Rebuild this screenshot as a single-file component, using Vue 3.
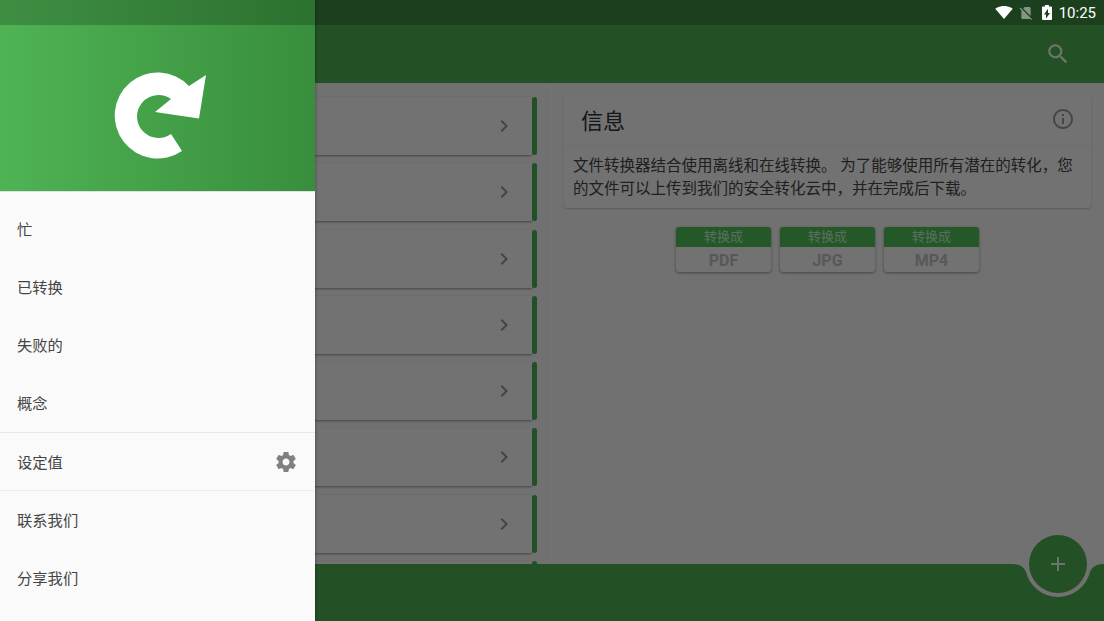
<template>
  <div class="screen">
    <div class="app">
      <header class="toolbar">
        <svg class="search-icon" viewBox="0 0 24 24"><path d="M15.5 14h-.79l-.28-.27A6.47 6.47 0 0 0 16 9.5 6.5 6.5 0 1 0 9.5 16c1.61 0 3.09-.59 4.23-1.57l.27.28v.79l5 4.99L20.49 19l-4.99-5zm-6 0C7.01 14 5 11.99 5 9.5S7.01 5 9.5 5 14 7.01 14 9.5 11.99 14 9.5 14z" /></svg>
      </header>

      <main class="content">
        <section class="list-pane">
          <div v-for="n in 8" :key="n" class="list-row">
            <div class="list-card">
              <svg class="chevron" viewBox="0 0 24 24"><path d="M10 6L8.59 7.41 13.17 12l-4.58 4.59L10 18l6-6z" /></svg>
            </div>
            <div class="list-bar"></div>
          </div>
        </section>

        <section class="info-pane">
          <div class="info-card">
            <div class="info-head">
              <h2>信息</h2>
              <svg class="info-icon" viewBox="0 0 24 24"><path d="M11 7h2v2h-2zm0 4h2v6h-2zm1-9C6.48 2 2 6.48 2 12s4.48 10 10 10 10-4.48 10-10S17.52 2 12 2zm0 18c-4.41 0-8-3.59-8-8s3.59-8 8-8 8 3.59 8 8-3.59 8-8 8z" /></svg>
            </div>
            <p>文件转换器结合使用离线和在线转换。 为了能够使用所有潜在的转化，您的文件可以上传到我们的安全转化云中，并在完成后下载。</p>
          </div>

          <div class="formats">
            <div v-for="f in formats" :key="f" class="format">
              <div class="format-top">转换成</div>
              <div class="format-name">{{ f }}</div>
            </div>
          </div>
        </section>
      </main>

      <footer class="bottom-bar">
        <svg class="bar-shape" viewBox="0 0 1104 57">
          <path d="M0 0H1012C1020 0 1024 3 1026 8A33 33 0 0 0 1090 8C1092 3 1096 0 1104 0V57H0Z" />
        </svg>
        <button class="fab">
          <svg viewBox="0 0 24 24"><path d="M19 13h-6v6h-2v-6H5v-2h6V5h2v6h6v2z" /></svg>
        </button>
      </footer>
    </div>

    <div class="scrim"></div>

    <aside class="drawer">
      <div class="drawer-head">
        <svg class="logo" viewBox="110 70 100 92">
          <path d="M206 74L189 85A43 43 0 1 0 182 150L171 133A21.5 21.5 0 1 1 171 98L155 111L199 117.5Z" />
        </svg>
      </div>
      <nav class="menu">
        <a v-for="m in topItems" :key="m" class="menu-item">{{ m }}</a>
      </nav>
      <div class="settings-row">
        <span class="settings-label">设定值</span>
        <svg class="gear" viewBox="0 0 24 24"><path d="M19.43 12.98c.04-.32.07-.64.07-.98s-.03-.66-.07-.98l2.11-1.65c.19-.15.24-.42.12-.64l-2-3.46c-.12-.22-.39-.3-.61-.22l-2.49 1c-.52-.4-1.08-.73-1.69-.98l-.38-2.65C14.46 2.18 14.25 2 14 2h-4c-.25 0-.46.18-.49.42l-.38 2.65c-.61.25-1.17.59-1.69.98l-2.49-1c-.23-.09-.49 0-.61.22l-2 3.46c-.13.22-.07.49.12.64l2.11 1.65c-.04.32-.07.65-.07.98s.03.66.07.98l-2.11 1.65c-.19.15-.24.42-.12.64l2 3.46c.12.22.39.3.61.22l2.49-1c.52.4 1.08.73 1.69.98l.38 2.65c.03.24.24.42.49.42h4c.25 0 .46-.18.49-.42l.38-2.65c.61-.25 1.17-.59 1.69-.98l2.49 1c.23.09.49 0 .61-.22l2-3.46c.12-.22.07-.49-.12-.64l-2.11-1.65zM12 15.5c-1.93 0-3.5-1.57-3.5-3.5s1.57-3.5 3.5-3.5 3.5 1.57 3.5 3.5-1.57 3.5-3.5 3.5z" /></svg>
      </div>
      <nav class="menu menu-bottom">
        <a v-for="m in bottomItems" :key="m" class="menu-item">{{ m }}</a>
      </nav>
    </aside>

    <div class="status-bar">
      <svg class="st-wifi" viewBox="0 3 24 18.5" preserveAspectRatio="none"><path d="M12.01 21.49L23.64 7c-.45-.34-4.93-4-11.64-4C5.28 3 .81 6.66.36 7l11.63 14.49.01.01.01-.01z" /></svg>
      <svg class="st-sim" viewBox="0 0 24 24"><path d="M18.99 5c0-1.1-.89-2-1.99-2h-7L7.66 5.34 19 16.68 18.99 5zM3.65 3.88L2.38 5.15 5 7.77V19c0 1.1.9 2 2 2h10.01c.35 0 .67-.1.96-.26l1.88 1.88 1.27-1.27L3.65 3.88z" /></svg>
      <svg class="st-batt" viewBox="7 2 10 20" preserveAspectRatio="none"><path d="M15.67 4H14V2h-4v2H8.33C7.6 4 7 4.6 7 5.33v15.33C7 21.4 7.6 22 8.33 22h7.33c.74 0 1.34-.6 1.34-1.33V5.33C17 4.6 16.4 4 15.67 4zM11 20v-5.5H9L13 7v5.5h2L11 20z" /></svg>
      <span class="time">10:25</span>
    </div>
  </div>
</template>

<script setup>
const formats = ["PDF", "JPG", "MP4"];
const topItems = ["忙", "已转换", "失败的", "概念"];
const bottomItems = ["联系我们", "分享我们"];
</script>

<style>
html,
body {
  margin: 0;
  overflow: hidden;
}
</style>

<style scoped>
.screen {
  position: relative;
  width: 1104px;
  height: 621px;
  overflow: hidden;
  font-family: Roboto, "Noto Sans CJK SC", sans-serif;
}

.app {
  display: flex;
  flex-direction: column;
  height: 100%;
  background: #e2e2e2;
}

.toolbar {
  flex: none;
  height: 58px;
  padding-top: 25px;
  padding-right: 33px;
  display: flex;
  align-items: center;
  justify-content: flex-end;
  background: #48a04b;
}

.search-icon {
  width: 26px;
  height: 26px;
  fill: #fff;
  opacity: 0.8;
}

.content {
  flex: 1;
  min-height: 0;
  display: flex;
  overflow: hidden;
}

.list-pane {
  flex: none;
  width: 552px;
  box-sizing: border-box;
  padding: 14px 14px 0 16px;
  border-right: 1px solid #e9e9e9;
  display: flex;
  flex-direction: column;
  gap: 8.25px;
}

.list-row {
  flex: none;
  height: 58px;
  display: flex;
}

.list-card {
  flex: 1;
  padding-right: 16px;
  display: flex;
  align-items: center;
  justify-content: flex-end;
  background: #e4e4e4;
  box-shadow: 0 1px 2px rgba(0, 0, 0, 0.4);
}

.list-bar {
  flex: none;
  width: 5px;
  border-radius: 3px;
  background: #42a04a;
}

.chevron {
  width: 24px;
  height: 24px;
  fill: #888;
}

.info-pane {
  flex: 1;
  padding: 12px 13px 0 12px;
}

.info-card {
  background: #e4e4e4;
  border-radius: 3px;
  box-shadow: 0 1px 2px rgba(0, 0, 0, 0.2);
}

.info-head {
  height: 48px;
  padding: 0 16px 2px 17px;
  display: flex;
  align-items: center;
  justify-content: space-between;
  border-bottom: 1px solid #dcdcdc;
}

.info-head h2 {
  margin: 0;
  font-size: 22px;
  font-weight: 400;
  color: #2e2e2e;
}

.info-icon {
  width: 24px;
  height: 24px;
  fill: #8c8c8c;
}

.info-card p {
  margin: 0;
  padding: 9px 16px 7px 9px;
  font-size: 15.5px;
  line-height: 23px;
  color: #404040;
}

.formats {
  margin-top: 19px;
  display: flex;
  justify-content: center;
  gap: 9px;
}

.format {
  width: 95px;
  border-radius: 3px;
  overflow: hidden;
  background: #e4e4e4;
  box-shadow: 0 1px 3px rgba(0, 0, 0, 0.4);
  text-align: center;
}

.format-top {
  height: 20px;
  line-height: 20px;
  font-size: 13px;
  color: rgba(255, 255, 255, 0.6);
  background: #48b052;
}

.format-name {
  height: 25px;
  line-height: 27px;
  font-size: 16px;
  font-weight: 700;
  color: #b0b0b0;
}

.bottom-bar {
  flex: none;
  position: relative;
  height: 57px;
}

.bar-shape {
  display: block;
  width: 100%;
  height: 100%;
  fill: #48a04b;
}

.fab {
  position: absolute;
  left: 1029px;
  top: -29px;
  width: 58px;
  height: 58px;
  padding: 0;
  border: none;
  border-radius: 50%;
  display: flex;
  align-items: center;
  justify-content: center;
  background: #48a04b;
}

.fab svg {
  width: 24px;
  height: 24px;
  fill: #fff;
  opacity: 0.8;
}

.scrim {
  position: absolute;
  inset: 0;
  background: rgba(0, 0, 0, 0.5);
}

.drawer {
  position: absolute;
  left: 0;
  top: 0;
  bottom: 0;
  width: 315px;
  background: #fafafa;
  box-shadow: 1px 0 3px rgba(0, 0, 0, 0.25);
}

.drawer-head {
  height: 166px;
  padding-top: 25px;
  display: flex;
  align-items: center;
  justify-content: center;
  background: linear-gradient(90deg, #4fb354, #388e3c);
  border-bottom: 1px solid #e0e0e0;
}

.logo {
  width: 100px;
  height: 92px;
  margin-left: 5px;
  margin-top: 17px;
  fill: #fff;
}

.menu {
  display: flex;
  flex-direction: column;
  padding-top: 8px;
}

.menu-item,
.settings-row {
  padding-left: 17px;
  font-size: 15.3px;
  color: #444;
}

.menu-item {
  height: 58px;
  line-height: 60px;
}

.settings-row {
  height: 57px;
  padding-right: 17px;
  display: flex;
  align-items: center;
  justify-content: space-between;
  border-top: 1px solid #e8e8e8;
  border-bottom: 1px solid #eeeeee;
}

.settings-label {
  padding-bottom: 2px;
}

.gear {
  width: 24px;
  height: 24px;
  fill: #808080;
}

.menu-bottom {
  padding-top: 0;
}

.status-bar {
  position: absolute;
  left: 0;
  right: 0;
  top: 0;
  height: 25px;
  padding-right: 8px;
  box-sizing: border-box;
  display: flex;
  align-items: center;
  justify-content: flex-end;
  background: rgba(0, 0, 0, 0.2);
  color: #fff;
}

.status-bar svg {
  fill: #fff;
}

.st-wifi {
  width: 18px;
  height: 13px;
}

.st-sim {
  width: 16px;
  height: 16px;
  margin-left: 5px;
  opacity: 0.45;
}

.st-batt {
  width: 10px;
  height: 15px;
  margin-left: 8px;
}

.time {
  margin-left: 7px;
  font-size: 15px;
}
</style>
